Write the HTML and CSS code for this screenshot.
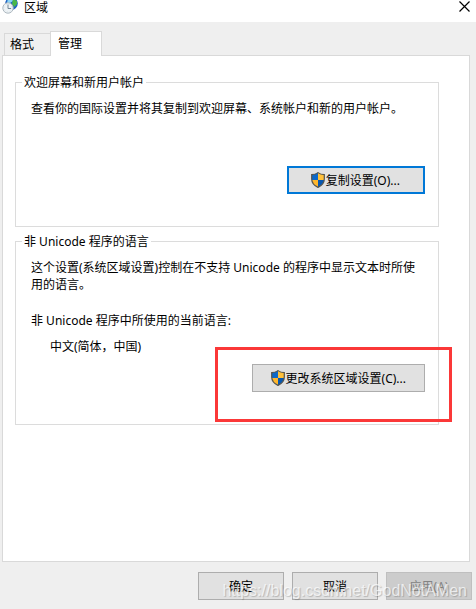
FILE: index.html
```html
<!DOCTYPE html>
<html lang="zh-CN">
<head>
  <meta charset="UTF-8">
  <meta name="viewport" content="width=device-width, initial-scale=1.0">
  <title>区域</title>
  <link rel="stylesheet" href="styles.css">
</head>
<body>
  <svg class="defs" width="0" height="0" aria-hidden="true">
    <defs>
      <clipPath id="shield-shape">
        <path d="M7 .6 C5 2.200 3 2.600 .7 2.600 V7 C.7 11.200 4 14 7 15.400 C10 14 13.300 11.200 13.300 7 V2.600 C11 2.600 9 2.200 7 .6 Z"/>
      </clipPath>
      <symbol id="shield" viewBox="0 0 14 16">
        <g clip-path="url(#shield-shape)">
          <rect width="7" height="8" fill="#0c68c8"/>
          <rect x="7" width="7" height="8" fill="#ffc13b"/>
          <rect y="8" width="7" height="8" fill="#ffb62c"/>
          <rect x="7" y="8" width="7" height="8" fill="#0757b0"/>
        </g>
        <path d="M7 .6 C5 2.200 3 2.600 .7 2.600 V7 C.7 11.200 4 14 7 15.400 C10 14 13.300 11.200 13.300 7 V2.600 C11 2.600 9 2.200 7 .6 Z" fill="none" stroke="#55554f" stroke-width="1.2"/>
      </symbol>
    </defs>
  </svg>

  <header class="titlebar">
    <svg class="app-icon" viewBox="0 0 18 14" aria-hidden="true">
      <circle cx="11.500" cy="3.500" r="6.300" fill="#1d62c4"/>
      <path d="M8 -2 L12 -2 L13 1 L10 3 L10 6 L7 3 Z" fill="#8ad4f5"/>
      <path d="M13 -1 L17 1 L17 4 L14.500 7 L12 4 Z" fill="#49b749"/>
      <circle cx="8" cy="8" r="5.200" fill="#eef3f6" stroke="#adb8bf"/>
      <path d="M8 4.500 V8.500 H11" fill="none" stroke="#738797"/>
      <circle cx="8" cy="8" r="3.800" fill="none" stroke="#c9d5dd" stroke-width=".6" stroke-dasharray="1 2"/>
    </svg>
    <h1 class="title">区域</h1>
    <button class="close" type="button" aria-label="关闭">
      <svg viewBox="0 0 11 11"><path d="M.5 .5 L10.500 10.500 M10.500 .5 L.5 10.500" stroke="#000" stroke-width="1.200"/></svg>
    </button>
  </header>

  <div class="tabs" role="tablist">
    <button class="tab" type="button" role="tab" aria-selected="false">格式</button>
    <button class="tab tab-active" type="button" role="tab" aria-selected="true" aria-controls="panel">管理</button>
  </div>

  <main class="panel" id="panel" role="tabpanel">
    <fieldset class="group">
      <legend>欢迎屏幕和新用户帐户</legend>
      <div class="group-body">
        <p class="intro">查看你的国际设置并将其复制到欢迎屏幕、系统帐户和新的用户帐户。</p>
        <button class="btn btn-default" type="button"><svg class="shield"><use href="#shield"/></svg>复制设置(O)...</button>
      </div>
    </fieldset>

    <fieldset class="group">
      <legend>非 Unicode 程序的语言</legend>
      <div class="group-body">
        <p class="desc">这个设置(系统区域设置)控制在不支持 Unicode 的程序中显示文本时所使用的语言。</p>
        <p class="label">非 Unicode 程序中所使用的当前语言:</p>
        <p class="value">中文(简体，中国)</p>
        <div class="marked">
          <button class="btn" type="button"><svg class="shield"><use href="#shield"/></svg>更改系统区域设置(C)...</button>
          <span class="mark"></span>
        </div>
      </div>
    </fieldset>
  </main>

  <footer class="actions">
    <button class="btn" type="button">确定</button>
    <button class="btn" type="button">取消</button>
    <button class="btn" type="button" disabled>应用(A)</button>
    <span class="watermark">https://blog.csdn.net/GodNotAMen</span>
  </footer>
</body>
</html>
```
FILE: styles.css
```css
* {
  box-sizing: border-box;
}
body {
  display: flex;
  flex-direction: column;
  min-height: 100vh;
  margin: 0;
  background: #efefef;
  color: #000;
  font: 12px/17px "Noto Sans", "Noto Sans CJK SC", sans-serif;
}
button {
  font: inherit;
  color: inherit;
}
p {
  margin: 0;
}
.defs {
  position: absolute;
}

/* title bar */
.titlebar {
  display: flex;
  align-items: flex-start;
  height: 22px;
  padding-right: 6px;
  background: #fff;
}
.app-icon {
  width: 18px;
  height: 14px;
  margin-right: 6px;
}
.title {
  flex: 1;
  margin: 0;
  font-size: 12px;
  font-weight: normal;
  line-height: 15px;
}
.close {
  padding: 1px 0;
  border: 0;
  background: none;
}
.close svg {
  display: block;
  width: 11px;
  height: 11px;
}

/* tabs, the active one covers the top line of the panel */
.tabs {
  display: flex;
  align-items: flex-end;
  padding: 9px 4px 0;
}
.tab {
  height: 22px;
  padding: 0 16px 0 5px;
  border: 1px solid #d9d9d9;
  border-width: 1px 0 0 1px;
  background: #f0f0f0;
}
.tab-active {
  z-index: 1;
  height: 25px;
  margin-bottom: -1px;
  padding: 0 19px 2px 7px;
  border-width: 1px 1px 0;
  background: #fff;
}
.panel {
  flex: 1;
  margin: 0 6px 0 2px;
  padding: 18px 30px 18px 12px;
  border: 1px solid #d9d9d9;
  background: #fff;
}

/* group boxes */
.group {
  min-width: 0;
  margin: 0 0 6px;
  padding: 9px 13px 32px 6px;
  border: 1px solid #dcdcdc;
}
.group legend {
  padding: 0 2px;
}
.group-body {
  display: flex;
  flex-direction: column;
  align-items: flex-start;
  padding-left: 9px;
}
.intro {
  margin-bottom: 49px;
}
.desc {
  margin-bottom: 19px;
}
.label,
.value {
  margin-bottom: 9px;
}
.value {
  padding-left: 19px;
}

.btn {
  display: flex;
  align-items: center;
  justify-content: center;
  height: 28px;
  padding: 0 18px 0 17px;
  border: 1px solid #adadad;
  background: #e1e1e1;
}
.btn:disabled {
  border-color: #bfbfbf;
  background: #ccc;
  color: #838383;
}
.btn-default {
  align-self: flex-end;
  padding: 0 23px 0 21px;
  border: 2px solid #0078d7;
}
.shield {
  width: 16px;
  height: 16px;
}

/* red frame around the button */
.marked {
  position: relative;
  align-self: flex-end;
}
.mark {
  position: absolute;
  inset: -17px -27px -30px -37px;
  border: 3px solid #fb3838;
  pointer-events: none;
}

.actions {
  position: relative;
  display: flex;
  justify-content: flex-end;
  gap: 8px;
  padding: 10px 4px 9px;
}
.actions .btn {
  width: 86px;
  padding: 0;
}
.watermark {
  position: absolute;
  right: 9px;
  bottom: 9px;
  color: rgba(255, 255, 255, 0.7);
  font: 16px/18px "Liberation Sans", Arial, sans-serif;
  text-shadow: 1px 1px 1px rgba(0, 0, 0, 0.2);
  pointer-events: none;
}
```
